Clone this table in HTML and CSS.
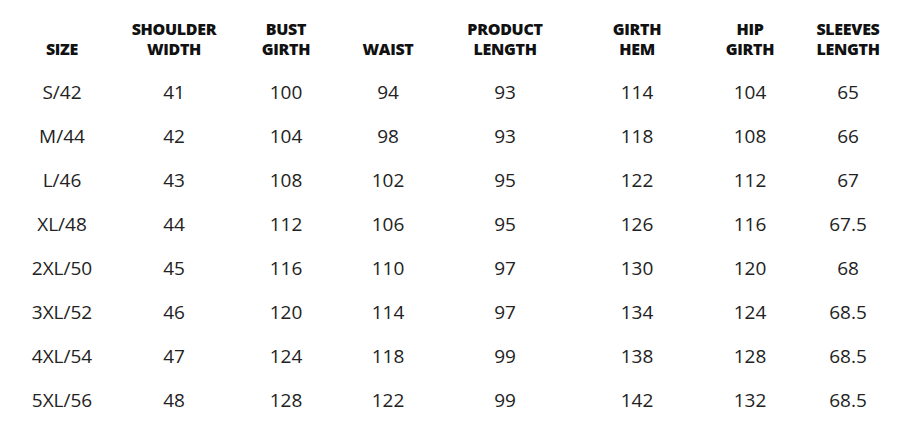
FILE: index.html
```
<!DOCTYPE html>
<html>
<head>
<meta charset="utf-8">
<link rel="stylesheet" href="styles.css">
</head>
<body>
<div class="chart">
  <div class="head"><span>SIZE</span></div>
  <div class="head"><span>SHOULDER<br>WIDTH</span></div>
  <div class="head"><span>BUST<br>GIRTH</span></div>
  <div class="head"><span>WAIST</span></div>
  <div class="head"><span>PRODUCT<br>LENGTH</span></div>
  <div class="head"><span>GIRTH<br>HEM</span></div>
  <div class="head"><span>HIP<br>GIRTH</span></div>
  <div class="head"><span>SLEEVES<br>LENGTH</span></div>

  <div class="cell">S/42</div><div class="cell">41</div><div class="cell">100</div><div class="cell">94</div><div class="cell">93</div><div class="cell">114</div><div class="cell">104</div><div class="cell">65</div>
  <div class="cell">M/44</div><div class="cell">42</div><div class="cell">104</div><div class="cell">98</div><div class="cell">93</div><div class="cell">118</div><div class="cell">108</div><div class="cell">66</div>
  <div class="cell">L/46</div><div class="cell">43</div><div class="cell">108</div><div class="cell">102</div><div class="cell">95</div><div class="cell">122</div><div class="cell">112</div><div class="cell">67</div>
  <div class="cell">XL/48</div><div class="cell">44</div><div class="cell">112</div><div class="cell">106</div><div class="cell">95</div><div class="cell">126</div><div class="cell">116</div><div class="cell">67.5</div>
  <div class="cell">2XL/50</div><div class="cell">45</div><div class="cell">116</div><div class="cell">110</div><div class="cell">97</div><div class="cell">130</div><div class="cell">120</div><div class="cell">68</div>
  <div class="cell">3XL/52</div><div class="cell">46</div><div class="cell">120</div><div class="cell">114</div><div class="cell">97</div><div class="cell">134</div><div class="cell">124</div><div class="cell">68.5</div>
  <div class="cell">4XL/54</div><div class="cell">47</div><div class="cell">124</div><div class="cell">118</div><div class="cell">99</div><div class="cell">138</div><div class="cell">128</div><div class="cell">68.5</div>
  <div class="cell">5XL/56</div><div class="cell">48</div><div class="cell">128</div><div class="cell">122</div><div class="cell">99</div><div class="cell">142</div><div class="cell">132</div><div class="cell">68.5</div>
</div>
</body>
</html>
```

FILE: styles.css
```
html, body {
  margin: 0;
  padding: 0;
  background: #ffffff;
}
body {
  width: 909px;
  height: 427px;
  overflow: hidden;
  font-family: "Open Sans", "Noto Sans", sans-serif;
  color: #222222;
}
.chart {
  display: grid;
  grid-template-columns: 124px 100px 124px 80px 154px 110px 116px 80px;
  grid-template-rows: 70px repeat(8, 44px);
  justify-items: center;
}
.head {
  display: flex;
  align-items: flex-end;
  justify-content: center;
  text-align: center;
  font-weight: 800;
  font-size: 16px;
  line-height: 20px;
  letter-spacing: -0.3px;
  padding-bottom: 11px;
  box-sizing: border-box;
  height: 70px;
  white-space: nowrap;
  color: #111111;
}
.cell {
  font-size: 19px;
  line-height: 44px;
  text-align: center;
  white-space: nowrap;
}
```
